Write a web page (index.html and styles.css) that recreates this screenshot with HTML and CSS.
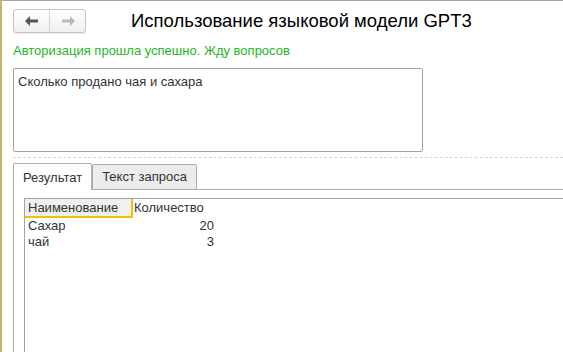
FILE: index.html
```html
<!DOCTYPE html>
<html lang="ru">
<head>
<meta charset="utf-8">
<link rel="stylesheet" href="styles.css">
</head>
<body>
<div class="page">
  <div class="header">
    <div class="nav">
      <button class="nav-btn back" aria-label="Назад">
        <svg width="14" height="10" viewBox="0 0 14 10"><path d="M0 5 L5 0 L5 3.5 L13 3.5 L13 6.5 L5 6.5 L5 10 Z" fill="#555"/></svg>
      </button>
      <button class="nav-btn fwd" aria-label="Вперёд">
        <svg width="14" height="10" viewBox="0 0 14 10"><path d="M14 5 L9 0 L9 3.5 L1 3.5 L1 6.5 L9 6.5 L9 10 Z" fill="#b8b8b8"/></svg>
      </button>
    </div>
    <h1 class="title">Использование языковой модели GPT3</h1>
  </div>
  <div class="status">Авторизация прошла успешно. Жду вопросов</div>
  <div class="query">Сколько продано чая и сахара</div>
  <div class="separator"></div>
  <div class="tabs">
    <div class="tab active">Результат</div>
    <div class="tab">Текст запроса</div>
    <div class="tab-rest"></div>
  </div>
  <div class="panel">
    <div class="grid">
      <div class="row head">
        <div class="cell name selected">Наименование</div>
        <div class="cell qty-head">Количество</div>
      </div>
      <div class="row">
        <div class="cell name">Сахар</div>
        <div class="cell qty">20</div>
      </div>
      <div class="row">
        <div class="cell name">чай</div>
        <div class="cell qty">3</div>
      </div>
    </div>
  </div>
</div>
</body>
</html>
```

FILE: styles.css
```css
* { box-sizing: border-box; }
html, body { margin: 0; padding: 0; }
body {
  width: 563px;
  height: 352px;
  overflow: hidden;
  background: #fff;
  border-left: 2px solid #c9b462;
  border-top: 1px solid #a6a6a6;
  font-family: Arial, "Liberation Sans", sans-serif;
  font-size: 13px;
  color: #333;
}
.page {
  padding: 8px 0 0 11px;
  display: flex;
  flex-direction: column;
  height: 351px;
}
.header {
  display: flex;
  align-items: center;
  height: 24px;
}
.nav {
  display: flex;
  width: 73px;
  height: 24px;
  border: 1px solid #c4c4c4;
  border-radius: 3px;
  background: linear-gradient(#ffffff, #f0f0f0);
  box-shadow: 0 1px 1px rgba(0,0,0,0.08);
}
.nav-btn {
  flex: 1;
  border: 0;
  background: transparent;
  padding: 0;
  display: flex;
  align-items: center;
  justify-content: center;
}
.nav-btn.back { border-right: 1px solid #d4d4d4; }
.title {
  margin: 0 0 0 45px;
  font-weight: normal;
  font-size: 18.5px;
  color: #000;
  line-height: 24px;
}
.status {
  margin-top: 10px;
  color: #1fb51f;
  font-size: 13px;
  line-height: 15px;
}
.query {
  margin-top: 10px;
  width: 410px;
  height: 84px;
  border: 1px solid #a3a3a3;
  border-radius: 2px;
  padding: 5px 4px;
  color: #333;
  line-height: 15px;
}
.separator {
  margin-top: 5px;
  border-top: 1px dashed #d6d6d6;
  height: 0;
}
.tabs {
  margin-top: 5px;
  display: flex;
  align-items: flex-end;
  height: 27px;
}
.tab {
  height: 26px;
  padding: 0 9px;
  line-height: 24px;
  border: 1px solid #acacac;
  border-radius: 2px 2px 0 0;
  background: #ececec;
  color: #333;
}
.tab.active {
  height: 27px;
  background: #fff;
  border-bottom: 0;
  line-height: 27px;
}
.tab-rest {
  flex: 1;
  border-bottom: 1px solid #acacac;
}
.panel {
  flex: 1;
  border-left: 1px solid #acacac;
  padding: 8px 0 0 10px;
  display: flex;
}
.grid {
  flex: 1;
  border-top: 1px solid #a3a3a3;
  border-left: 1px solid #a3a3a3;
}
.row {
  display: flex;
  height: 16px;
  line-height: 16px;
}
.row.head {
  height: 19px;
  line-height: 18px;
}
.cell { color: #333; }
.cell.name {
  width: 108px;
  padding-left: 3px;
}
.cell.selected {
  background: #f0f0f0;
  border-right: 2px solid #f2c200;
  border-bottom: 2px solid #f2c200;
}
.qty-head { padding-left: 1px; }
.cell.qty {
  width: 81px;
  text-align: right;
}
```
